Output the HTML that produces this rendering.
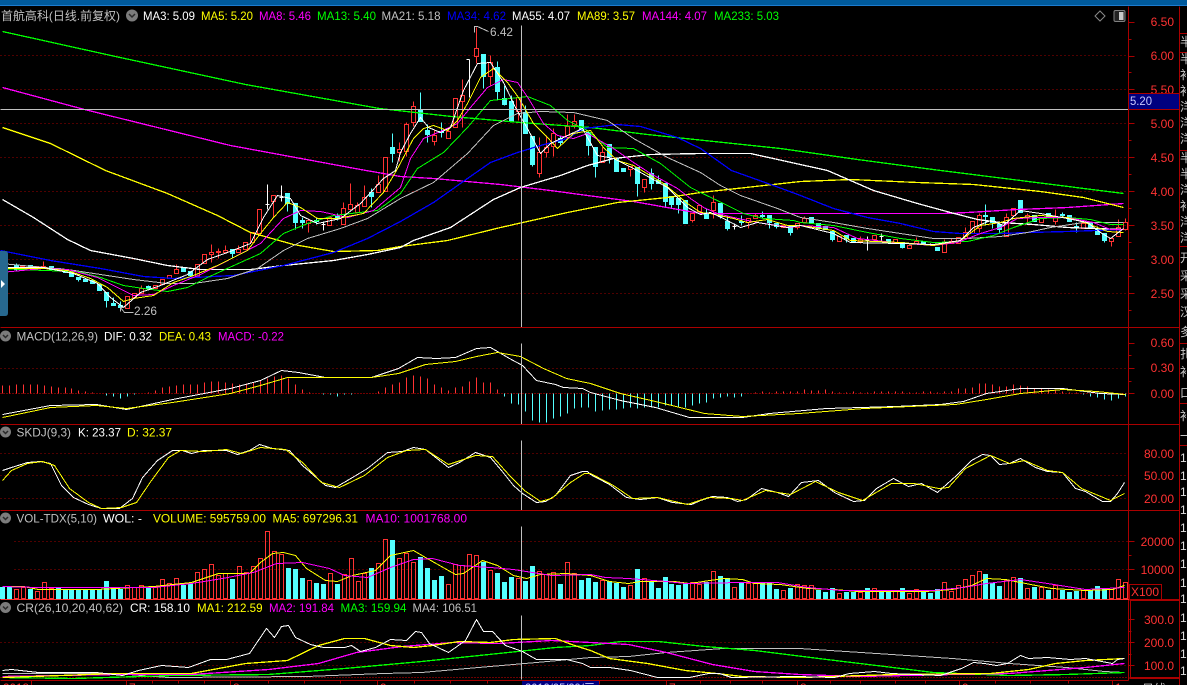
<!DOCTYPE html>
<html><head><meta charset="utf-8"><style>
html,body{margin:0;padding:0;background:#000;width:1187px;height:685px;overflow:hidden}
svg{display:block;position:absolute;left:0;top:0}
text{font-family:"Liberation Sans","Noto Sans CJK SC",sans-serif;font-size:12px}
.l{fill:none;stroke-width:1;shape-rendering:crispEdges}
.t{stroke-width:1.3;shape-rendering:crispEdges}
.ax text{fill:#ff3232;text-anchor:end}
</style></head><body>
<svg width="1187" height="685" viewBox="0 0 1187 685" xmlns="http://www.w3.org/2000/svg">
<rect width="1187" height="685" fill="#000"/>
<rect width="1187" height="5" fill="#005a9c"/><rect y="5" width="1187" height="1" fill="#1c7cd0"/>

<g transform="translate(.5 .5)" shape-rendering="crispEdges">
<!-- grid -->
<path d="M0 55H1128M0 89H1128M0 123H1128M0 157H1128M0 191H1128M0 225H1128M0 259H1128M0 293H1128M0 368H1128M0 453H1128M0 475H1128M0 498H1128M14 541H1128M14 569H1128M0 642H1128M0 665H1128" stroke="#a00000" stroke-dasharray="1 3" fill="none"/>
<path d="M0 393H1128M0 677H1128" stroke="#e00000" stroke-dasharray="1 2" fill="none"/>

<!-- candles red -->
<path fill="none" stroke="#ff3232" d="M20 266h4V269h-4zM34 266h4V268h-4zM41 266h4V267h-4zM43 261V266M125 296h4V308h-4zM132 293h4V297h-4zM139 288h4V293h-4zM141 285V288M153 285h4V288h-4zM160 279h4V284h-4zM167 275h4V278h-4zM174 269h4V273h-4zM176 264V269M195 264h4V276h-4zM202 254h4V263h-4zM209 252h4V254h-4zM211 244V252M211 254V262M216 251h4V252h-4zM218 248V251M218 252V258M223 250h4V252h-4zM225 245V250M236 249h4V252h-4zM238 245V249M243 242h4V249h-4zM250 232h4V242h-4zM257 209h4V233h-4zM271 195h4V201h-4zM273 201V217M306 220h4V223h-4zM308 218V220M308 223V232M327 217h4V225h-4zM341 208h4V224h-4zM343 202V208M348 204h4V209h-4zM350 183V204M355 205h4V212h-4zM357 202V205M362 197h4V206h-4zM364 185V197M376 184h4V192h-4zM378 175V184M383 157h4V191h-4zM397 149h4V152h-4zM399 142V149M399 152V161M404 124h4V151h-4zM406 122V124M406 151V156M411 106h4V122h-4zM413 101V106M413 122V126M432 135h4V141h-4zM434 130V135M434 141V145M446 131h4V138h-4zM448 128V131M453 98h4V127h-4zM460 95h4V101h-4zM462 79V95M462 101V127M474 48h4V56h-4zM476 27V48M476 56V63M488 62h4V76h-4zM490 55V62M490 76V85M516 97h4V111h-4zM518 111V120M537 152h4V173h-4zM539 137V152M539 173V177M544 147h4V152h-4zM546 135V147M546 152V157M551 133h4V146h-4zM553 128V133M553 146V156M565 126h4V135h-4zM567 114V126M572 121h4V125h-4zM574 114V121M574 125V128M600 152h4V162h-4zM602 147V152M628 166h4V169h-4zM630 169V176M642 179h4V187h-4zM644 187V192M690 213h4V220h-4zM692 220V222M697 205h4V211h-4zM711 202h4V210h-4zM713 195V202M713 210V218M746 218h4V222h-4zM748 222V228M753 215h4V218h-4zM755 213V215M781 225h4V227h-4zM795 223h4V227h-4zM797 227V229M802 218h4V222h-4zM804 216V218M837 236h4V241h-4zM858 239h4V241h-4zM860 236V239M860 241V243M872 235h4V239h-4zM893 239h4V242h-4zM907 245h4V248h-4zM914 241h4V243h-4zM916 237V241M942 242h4V252h-4zM944 239V242M949 241h4V243h-4zM951 238V241M956 237h4V243h-4zM963 232h4V238h-4zM965 227V232M970 221h4V233h-4zM977 215h4V228h-4zM979 213V215M979 228V232M1004 217h4V236h-4zM1006 213V217M1011 208h4V215h-4zM1025 215h4V217h-4zM1027 213V215M1027 217V222M1039 217h4V222h-4zM1053 216h4V221h-4zM1055 209V216M1055 221V224M1081 223h4V228h-4zM1109 238h4V241h-4zM1111 241V246M1116 227h4V236h-4zM1118 219V227M1123 222h4V229h-4zM1125 218V222M1125 229V230"/>
<!-- candles cyan -->
<path fill="#54ffff" stroke="#54ffff" d="M14 265h4V269h-4zM16 263V270M28 265h4V268h-4zM49 266h4V269h-4zM56 268h4V269h-4zM63 269h4V272h-4zM69 272h4V276h-4zM76 277h4V279h-4zM78 279V281M83 279h4V281h-4zM90 280h4V283h-4zM97 284h4V290h-4zM104 292h4V300h-4zM106 300V307M111 303h4V305h-4zM113 297V303M118 305h4V307h-4zM120 301V310M146 286h4V288h-4zM148 285V290M181 268h4V271h-4zM188 271h4V275h-4zM230 249h4V253h-4zM232 253V258M285 193h4V203h-4zM287 203V211M293 203h4V222h-4zM295 222V229M300 220h4V222h-4zM302 217V228M314 220h4V221h-4zM316 218V224M335 216h4V217h-4zM337 213V220M369 192h4V196h-4zM371 188V207M390 147h4V153h-4zM392 133V162M418 109h4V121h-4zM420 92V109M425 130h4V134h-4zM427 124V142M439 131h4V132h-4zM441 122V137M481 54h4V76h-4zM483 76V88M495 67h4V91h-4zM497 61V100M502 98h4V104h-4zM504 85V105M509 101h4V121h-4zM511 95V101M523 112h4V133h-4zM525 105V112M530 136h4V164h-4zM532 164V166M558 138h4V142h-4zM560 135V145M579 120h4V130h-4zM586 132h4V145h-4zM588 145V155M593 147h4V166h-4zM595 166V177M607 144h4V156h-4zM609 156V163M614 158h4V171h-4zM621 168h4V171h-4zM635 167h4V183h-4zM637 183V196M649 173h4V183h-4zM651 168V189M656 180h4V183h-4zM658 175V180M663 183h4V201h-4zM665 201V206M669 196h4V204h-4zM671 204V208M676 198h4V204h-4zM678 204V213M683 200h4V223h-4zM704 214h4V218h-4zM706 208V214M718 203h4V216h-4zM720 216V218M725 221h4V228h-4zM727 217V230M739 221h4V222h-4zM741 215V225M760 215h4V216h-4zM762 211V218M767 215h4V222h-4zM769 222V228M774 223h4V226h-4zM776 226V228M788 225h4V232h-4zM790 232V235M809 217h4V223h-4zM816 223h4V228h-4zM823 226h4V229h-4zM830 231h4V239h-4zM832 239V241M844 235h4V238h-4zM846 238V242M851 238h4V242h-4zM886 239h4V242h-4zM900 242h4V247h-4zM902 247V248M921 241h4V243h-4zM935 247h4V250h-4zM983 215h4V216h-4zM985 204V225M990 217h4V222h-4zM992 222V228M997 224h4V229h-4zM999 221V233M1018 200h4V212h-4zM1032 215h4V221h-4zM1046 213h4V217h-4zM1060 214h4V215h-4zM1062 212V216M1067 215h4V221h-4zM1074 226h4V227h-4zM1076 222V232M1088 222h4V227h-4zM1095 229h4V234h-4zM1097 226V229M1102 233h4V240h-4zM1104 240V242"/>
<!-- white dojis -->
<path fill="none" stroke="#fff" d="M267 184V209M265 204h4M281 185V201M279 197h4M323 222V230M321 224h4M469 59V97M466 59h3M867 236V250M865 240h4M881 233V240M879 236h4M930 243V245M928 244h4M734 223V229M732 226h4"/>
</g>

<g transform="translate(.5 .5)">
<!-- long MAs -->
<polyline class="l t" stroke="#00ff00" points="2,31 115,56 245,84 379,108 451,116 520,122 590,127 647,134 704,140 780,148 857,159 940,170 1020,180 1123,193"/>
<polyline class="l t" stroke="#ff00ff" points="2,87 84,109 230,145 360,169 400,176 433,178 500,184 550,190 587,195 633,201 700,213 800,213 943,213 967,212 1017,209 1067,207 1123,203"/>
<polyline class="l t" stroke="#ffff00" points="2,127 50,143 105,170 167,193 217,215 250,232 293,244 333,251 377,250 400,246 447,240 500,227 567,212 617,202 667,197 700,192 800,181 850,179 917,182 973,184 1040,191 1083,197 1123,207"/>
<polyline class="l t" stroke="#ffffff" points="2,199 33,217 67,239 90,250 133,258 167,265 200,269 250,269 283,265 333,260 367,254 400,247 413,240 450,227 493,199 520,187 560,175 587,165 613,158 650,154 700,153 750,153 827,170 873,190 917,203 950,212 977,219 1000,222 1033,224 1067,227 1123,229"/>
<polyline class="l t" stroke="#0000ff" points="0,250 50,260 100,268 143,276 173,278 233,275 283,265 333,252 367,238 400,221 433,202 467,178 490,162 517,152 540,145 567,138 583,128 617,124 640,126 677,137 700,148 731,170 773,185 800,195 833,208 867,217 900,223 933,231 960,233 1000,233 1027,232 1067,231 1123,229"/>
<!-- short MAs -->
<polyline class="l" stroke="#c0c0c0" points="0,263 33,266 67,269 100,274 133,279 167,283 193,283 227,278 257,268 283,250 307,238 340,228 367,218 400,198 433,182 467,153 493,125 517,113 540,111 573,112 607,120 633,138 667,157 700,172 720,185 740,195 777,208 800,217 833,222 867,228 900,233 933,238 967,238 1000,236 1027,232 1050,227 1083,222 1123,222"/>
<polyline class="l" stroke="#00ff00" points="0,268 43,270 77,271 100,277 123,285 143,288 167,291 187,287 207,277 240,262 260,253 283,233 307,223 333,215 377,210 400,193 417,168 443,152 467,127 490,100 510,98 527,96 550,105 567,120 587,130 607,147 633,148 660,163 690,187 700,192 723,203 743,213 763,218 793,220 800,222 833,225 867,232 900,238 933,242 967,241 993,235 1013,227 1040,218 1067,217 1090,219 1110,224 1123,224"/>
<polyline class="l" stroke="#ff00ff" points="0,272 43,268 67,269 97,277 113,285 133,295 153,294 173,285 200,274 233,257 260,243 283,218 300,210 320,211 347,217 373,210 400,187 410,158 423,138 440,131 457,123 470,107 487,87 503,79 517,82 528,98 543,123 557,135 573,138 587,133 613,148 633,162 650,173 677,188 690,198 703,207 717,213 733,217 757,222 790,227 800,225 833,227 857,238 893,242 933,245 957,242 980,233 1000,227 1017,218 1040,217 1067,217 1093,222 1110,229 1123,229"/>
<polyline class="l" stroke="#ffff00" points="0,268 43,268 67,270 90,278 107,287 123,301 133,298 153,295 173,282 193,275 217,265 247,250 260,233 273,217 287,202 300,207 317,218 337,218 363,213 383,192 396,170 413,138 423,128 433,125 447,130 457,120 467,103 480,77 493,68 507,82 518,97 533,123 547,137 557,148 573,133 590,130 603,147 617,160 633,165 663,183 687,203 700,212 710,213 733,218 747,222 767,219 787,225 800,225 833,230 850,240 900,242 933,245 960,240 980,225 1000,222 1013,218 1040,215 1067,217 1087,223 1107,231 1123,232"/>
<polyline class="l" stroke="#ffffff" points="0,267 43,267 73,273 97,283 110,297 123,307 140,292 160,285 187,274 207,259 227,252 250,243 263,217 277,195 290,198 300,215 317,223 340,218 360,203 383,178 395,170 400,152 410,133 420,117 428,127 440,132 450,127 463,90 477,63 490,62 503,82 515,107 528,130 540,153 550,143 567,135 582,128 597,155 613,158 633,168 667,187 687,207 700,214 710,212 723,218 740,227 757,222 787,227 800,225 833,233 850,242 900,243 933,244 960,240 973,227 990,220 1003,225 1020,210 1040,213 1067,218 1087,222 1100,232 1110,238 1123,228"/>

<!-- annotations -->
<path d="M474 32V26h3M477 26L488 31" fill="none" stroke="#c0c0c0" shape-rendering="crispEdges"/>
<path d="M120 307L124 312H133M120 307l4 0M120 307v4" fill="none" stroke="#c0c0c0" shape-rendering="crispEdges"/>

<!-- MACD bars -->
<path fill="none" stroke="#ff3232" shape-rendering="crispEdges" d="M2 393V385M9 393V385M16 393V384M23 393V384M30 393V384M37 393V384M44 393V385M51 393V386M58 393V387M65 393V387M71 393V388M78 393V390M85 393V391M92 393V392M148 393V392M155 393V390M162 393V387M169 393V386M176 393V385M183 393V384M190 393V384M197 393V384M204 393V382M211 393V381M218 393V381M225 393V382M232 393V383M239 393V384M246 393V383M253 393V382M260 393V380M267 393V378M274 393V376M281 393V375M288 393V378M295 393V384M302 393V389M309 393V392M378 393V391M385 393V387M392 393V384M399 393V382M406 393V377M413 393V375M420 393V376M427 393V378M434 393V384M441 393V387M448 393V390M455 393V387M462 393V386M469 393V381M476 393V377M483 393V382M490 393V382M497 393V389M755 393V392M762 393V391M769 393V392M776 393V391M783 393V391M790 393V391M797 393V391M804 393V389M811 393V390M818 393V390M825 393V389M832 393V391M839 393V392M846 393V392M853 393V391M860 393V392M867 393V392M874 393V391M881 393V391M888 393V391M895 393V391M902 393V391M909 393V392M916 393V392M923 393V391M930 393V391M937 393V392M944 393V391M951 393V391M958 393V388M965 393V388M972 393V387M979 393V383M985 393V383M992 393V384M999 393V386M1006 393V386M1013 393V384M1020 393V385M1027 393V386M1034 393V388M1041 393V388M1048 393V389M1055 393V390M1062 393V391M1069 393V392M1076 393V392"/>
<path fill="none" stroke="#54ffff" shape-rendering="crispEdges" d="M106 393V395M113 393V396M120 393V398M127 393V396M134 393V394M323 393V394M330 393V394M337 393V396M344 393V394M351 393V394M504 393V396M511 393V403M518 393V404M525 393V411M532 393V420M539 393V422M546 393V422M553 393V418M560 393V416M567 393V413M574 393V408M581 393V407M588 393V407M595 393V411M602 393V410M609 393V409M616 393V409M623 393V408M630 393V407M637 393V408M644 393V407M651 393V407M658 393V407M665 393V405M671 393V405M678 393V407M685 393V407M692 393V405M699 393V403M706 393V402M713 393V398M720 393V397M727 393V396M734 393V397M741 393V396M1083 393V394M1090 393V396M1097 393V397M1104 393V399M1111 393V400M1118 393V398M1125 393V396"/>
<polyline class="l" stroke="#ffffff" points="2,414 50,405 96,404 126,409 172,399 230,388 260,380 281,370 298,372 325,377 371,377 398,368 417,357 436,358 455,357 476,348 490,347 509,358 522,365 536,380 555,384 563,387 582,388 590,392 620,400 655,407 689,417 742,417 769,413 826,408 895,406 940,404 963,401 986,393 1020,388 1062,388 1100,393 1125,394"/>
<polyline class="l" stroke="#ffff00" points="2,417 50,407 96,405 126,408 172,402 230,393 260,385 287,377 325,377 371,377 398,373 425,364 455,361 476,356 497,352 520,356 543,368 566,378 590,383 620,393 655,401 704,413 742,416 799,413 864,408 955,404 986,399 1020,393 1062,389 1096,391 1125,394"/>

<!-- SKDJ -->
<polyline class="l" stroke="#ffffff" points="2,470 11,467 27,462 40,461 50,463 61,485 73,497 88,504 101,508 119,508 132,498 142,477 157,460 172,450 182,450 191,453 203,450 226,450 237,454 249,450 259,444 272,448 289,450 302,465 325,485 335,487 352,477 367,468 387,452 402,451 413,447 425,449 448,467 459,462 475,452 490,457 501,470 513,485 522,493 536,502 545,501 555,495 570,475 582,471 587,471 590,474 609,484 626,497 640,499 657,497 672,502 691,504 700,500 712,496 727,497 737,501 746,499 761,488 777,492 788,496 801,482 818,480 834,492 853,501 864,500 876,488 893,478 908,486 921,483 937,492 956,475 971,460 982,454 990,455 999,464 1009,463 1020,458 1035,467 1047,471 1062,472 1075,488 1085,491 1102,501 1110,501 1117,493 1124,482"/>
<polyline class="l" stroke="#ffff00" points="2,480 11,470 27,463 42,461 54,465 69,488 88,502 101,508 121,507 136,502 151,480 168,457 180,450 203,451 226,449 241,453 260,447 285,449 302,462 321,482 339,487 364,475 387,457 406,450 425,449 448,464 475,455 492,456 509,475 524,490 540,501 551,498 570,482 584,473 590,473 613,485 632,498 657,497 687,504 708,497 731,498 742,500 765,490 790,494 815,481 838,492 862,500 891,483 914,483 938,488 948,487 965,468 990,455 1009,463 1024,460 1047,470 1062,472 1081,488 1110,500 1124,493"/>

<!-- VOL bars -->
<path fill="none" stroke="#ff3232" shape-rendering="crispEdges" d="M14 589h4V598h-4zM21 587h4V598h-4zM35 591h4V598h-4zM42 582h4V598h-4zM49 588h4V598h-4zM125 585h4V598h-4zM132 587h4V598h-4zM139 585h4V598h-4zM153 587h4V598h-4zM160 579h4V598h-4zM167 583h4V598h-4zM174 578h4V598h-4zM195 572h4V598h-4zM202 569h4V598h-4zM209 564h4V598h-4zM216 575h4V598h-4zM223 573h4V598h-4zM237 566h4V598h-4zM244 572h4V598h-4zM251 566h4V598h-4zM258 558h4V598h-4zM265 531h4V598h-4zM272 551h4V598h-4zM279 554h4V598h-4zM307 580h4V598h-4zM328 573h4V598h-4zM342 574h4V598h-4zM349 558h4V598h-4zM356 581h4V598h-4zM362 573h4V598h-4zM376 563h4V598h-4zM383 539h4V598h-4zM397 558h4V598h-4zM404 553h4V598h-4zM411 562h4V598h-4zM446 584h4V598h-4zM453 564h4V598h-4zM460 565h4V598h-4zM467 554h4V598h-4zM474 555h4V598h-4zM488 570h4V598h-4zM516 578h4V598h-4zM537 571h4V598h-4zM544 574h4V598h-4zM551 572h4V598h-4zM565 562h4V598h-4zM572 573h4V598h-4zM600 580h4V598h-4zM628 585h4V598h-4zM642 578h4V598h-4zM690 582h4V598h-4zM697 584h4V598h-4zM711 571h4V598h-4zM732 587h4V598h-4zM746 583h4V598h-4zM753 582h4V598h-4zM781 590h4V598h-4zM795 584h4V598h-4zM802 585h4V598h-4zM809 585h4V598h-4zM837 593h4V598h-4zM858 592h4V598h-4zM872 588h4V598h-4zM893 591h4V598h-4zM907 593h4V598h-4zM914 589h4V598h-4zM942 582h4V598h-4zM949 591h4V598h-4zM956 585h4V598h-4zM963 579h4V598h-4zM970 575h4V598h-4zM977 571h4V598h-4zM1004 580h4V598h-4zM1011 577h4V598h-4zM1025 588h4V598h-4zM1039 587h4V598h-4zM1053 585h4V598h-4zM1081 590h4V598h-4zM1109 589h4V598h-4zM1116 579h4V598h-4zM1123 582h4V598h-4z"/>
<path fill="#54ffff" stroke="#54ffff" shape-rendering="crispEdges" d="M0 587h4V598h-4zM7 586h4V598h-4zM28 589h4V598h-4zM56 588h4V598h-4zM63 590h4V598h-4zM69 589h4V598h-4zM76 589h4V598h-4zM83 589h4V598h-4zM90 590h4V598h-4zM97 589h4V598h-4zM104 581h4V598h-4zM111 588h4V598h-4zM118 589h4V598h-4zM146 587h4V598h-4zM181 585h4V598h-4zM188 584h4V598h-4zM230 579h4V598h-4zM286 568h4V598h-4zM293 569h4V598h-4zM300 578h4V598h-4zM314 583h4V598h-4zM321 584h4V598h-4zM335 584h4V598h-4zM369 568h4V598h-4zM390 540h4V598h-4zM418 557h4V598h-4zM425 568h4V598h-4zM432 580h4V598h-4zM439 576h4V598h-4zM481 562h4V598h-4zM495 573h4V598h-4zM502 582h4V598h-4zM509 577h4V598h-4zM523 581h4V598h-4zM530 566h4V598h-4zM558 584h4V598h-4zM579 580h4V598h-4zM586 578h4V598h-4zM593 582h4V598h-4zM607 581h4V598h-4zM614 583h4V598h-4zM621 587h4V598h-4zM635 569h4V598h-4zM649 582h4V598h-4zM656 588h4V598h-4zM663 577h4V598h-4zM669 584h4V598h-4zM676 585h4V598h-4zM683 583h4V598h-4zM704 582h4V598h-4zM718 576h4V598h-4zM725 578h4V598h-4zM739 582h4V598h-4zM760 583h4V598h-4zM767 582h4V598h-4zM774 589h4V598h-4zM788 588h4V598h-4zM816 590h4V598h-4zM823 592h4V598h-4zM830 588h4V598h-4zM844 592h4V598h-4zM851 592h4V598h-4zM865 588h4V598h-4zM879 591h4V598h-4zM886 591h4V598h-4zM900 588h4V598h-4zM921 592h4V598h-4zM928 593h4V598h-4zM935 589h4V598h-4zM983 574h4V598h-4zM990 583h4V598h-4zM997 586h4V598h-4zM1018 578h4V598h-4zM1032 587h4V598h-4zM1046 590h4V598h-4zM1060 590h4V598h-4zM1067 592h4V598h-4zM1074 591h4V598h-4zM1088 590h4V598h-4zM1095 586h4V598h-4zM1102 588h4V598h-4z"/>
<polyline class="l" stroke="#ffff00" points="2,586 23,586 38,589 96,589 153,586 191,582 218,573 249,573 260,562 272,553 283,552 295,555 306,568 325,580 337,581 352,575 375,570 390,555 413,550 425,557 455,574 463,573 482,560 497,565 513,575 526,578 540,574 566,573 590,575 609,581 628,583 640,581 674,581 689,583 723,578 742,579 754,583 780,584 807,588 834,589 857,591 925,591 952,589 971,585 986,578 1005,579 1020,582 1051,588 1085,590 1112,589 1124,585"/>
<polyline class="l" stroke="#ff00ff" points="2,586 38,587 96,587 153,587 191,583 222,578 253,572 276,563 302,562 329,568 344,575 367,577 390,567 413,559 432,558 459,565 490,567 513,569 551,575 590,574 605,577 628,578 666,581 685,583 742,582 777,582 807,587 841,590 933,590 963,587 986,583 1020,579 1047,583 1085,589 1124,587"/>

<!-- CR -->
<polyline class="l" stroke="#c0c0c0" points="2,673 115,673 168,677 306,676 383,673 421,672 478,667 536,662 590,657 628,656 666,652 723,648 799,648 876,653 952,658 1009,663 1066,667 1104,671 1124,672"/>
<polyline class="l t" stroke="#00ff00" points="2,677 73,678 172,675 268,674 344,668 421,661 498,653 555,647 590,645 620,641 658,641 704,646 754,650 818,658 876,665 933,672 1009,675 1066,674 1124,672"/>
<polyline class="l t" stroke="#ff00ff" points="2,676 115,674 191,674 268,669 318,663 356,652 402,646 452,642 498,643 551,640 590,642 628,644 666,652 712,664 754,671 799,674 857,676 952,674 1009,673 1047,670 1085,667 1124,663"/>
<polyline class="l t" stroke="#ffff00" points="2,677 61,675 115,673 191,673 245,663 287,660 318,645 344,638 364,638 390,645 413,647 432,645 459,641 490,642 513,639 555,638 574,645 590,650 609,658 647,663 685,670 716,673 742,676 799,677 895,674 990,673 1028,669 1055,663 1085,660 1124,658"/>
<polyline class="l" stroke="#ffffff" points="2,670 11,669 38,672 96,672 122,675 138,670 161,665 188,667 210,659 226,659 249,653 266,628 274,637 281,626 288,625 295,637 310,644 323,647 344,647 351,645 360,651 375,647 390,639 406,640 415,631 421,632 429,643 448,652 465,640 476,619 483,631 492,631 505,645 522,651 536,659 566,659 582,663 590,667 609,667 630,670 657,677 689,677 708,673 719,673 731,677 796,676 834,677 849,673 874,671 891,673 940,675 961,668 973,662 984,663 996,665 1007,663 1020,655 1028,658 1047,657 1070,659 1085,658 1112,663 1117,659 1124,658"/>

<!-- crosshair -->
<g shape-rendering="crispEdges" stroke="#c0c0c0" fill="none">
<path d="M0 109H1128M521 25V327M521 343V424M521 440V510M521 526V599M521 615V679"/>
</g>

<!-- panel borders -->
<g shape-rendering="crispEdges" stroke="#aa0000" fill="none">
<path d="M0 327H1179M0 424H1179M0 510H1179M1128 6V680M1179 6V685M0 680H1128M1179 33H1187M1179 52H1187M1179 150H1187M1179 246H1187M1179 343H1187M1179 403H1187M1179 445H1187"/>
<path d="M0 599H1129" stroke="#ff3232"/>
<path d="M1129 599H1179M1129 600H1179M1129 678H1179M1129 677H1179M1130 600V678" />
<path d="M1128 22h6M1128 39h3M1128 56h6M1128 72h3M1128 89h6M1128 123h6M1128 140h3M1128 157h6M1128 174h3M1128 191h6M1128 208h3M1128 225h6M1128 242h3M1128 259h6M1128 276h3M1128 293h6M1128 310h3M1128 343h6M1128 355h3M1128 368h6M1128 381h3M1128 393h6M1128 541h6M1128 555h3M1128 569h6M1128 619h6M1128 631h3M1128 642h6M1128 654h3M1128 665h6"/>
<path d="M31 680v5M126 680v5M152 680v3M178 680v3M204 680v3M230 680v5M268 680v3M304 680v3M340 680v3M377 680v5M414 680v3M450 680v3M487 680v3M599 680v4M666 680v5M700 680v3M730 680v3M762 680v3M797 680v5M830 680v3M860 680v3M895 680v3M925 680v3M959 680v5M995 680v3M1030 680v3M1068 680v3M1112 680v5"/>
</g>
</g>

<!-- X100 box -->
<rect x="1129.5" y="584.5" width="32" height="15" fill="#000" stroke="#aa0000" shape-rendering="crispEdges"/>
<text x="1131" y="596" fill="#ff3232" textLength="28" lengthAdjust="spacingAndGlyphs">X100</text>

<!-- axis labels -->
<g class="ax">
<text x="1174" y="26">6.50</text><text x="1174" y="60">6.00</text><text x="1174" y="94">5.50</text><text x="1174" y="128">5.00</text><text x="1174" y="162">4.50</text><text x="1174" y="196">4.00</text><text x="1174" y="230">3.50</text><text x="1174" y="264">3.00</text><text x="1174" y="298">2.50</text>
<text x="1174" y="347">0.60</text><text x="1174" y="372">0.30</text><text x="1174" y="398">0.00</text>
<text x="1174" y="458">80.00</text><text x="1174" y="480">50.00</text><text x="1174" y="503">20.00</text>
<text x="1174" y="546">20000</text><text x="1174" y="574">10000</text>
<text x="1174" y="624">300.0</text><text x="1174" y="647">200.0</text><text x="1174" y="670">100.0</text>
</g>
<!-- 5.20 box over 5.50 -->
<rect x="1129" y="93" width="50" height="16" fill="#00007f"/>
<path d="M1129 93.5H1179M1129 109.5H1179" stroke="#aa0000" shape-rendering="crispEdges"/>
<text x="1130" y="105" fill="#c8c8ff" textLength="22" lengthAdjust="spacingAndGlyphs">5.20</text>

<!-- price labels -->
<text x="490" y="36" fill="#c0c0c0" textLength="23" lengthAdjust="spacingAndGlyphs">6.42</text>
<text x="134" y="315" fill="#c0c0c0" textLength="23" lengthAdjust="spacingAndGlyphs">2.26</text>

<!-- header -->
<text x="1" y="20" fill="#c0c0c0" textLength="119" lengthAdjust="spacingAndGlyphs">首航高科(日线.前复权)</text>
<circle cx="132" cy="15.5" r="6" fill="#7c7c7c"/><path d="M129 14l3 3 3-3" fill="none" stroke="#2a2a2a" stroke-width="1.5"/>
<g>
<text x="143" y="20" fill="#fff" textLength="52" lengthAdjust="spacingAndGlyphs">MA3: 5.09</text>
<text x="201" y="20" fill="#ff0" textLength="52" lengthAdjust="spacingAndGlyphs">MA5: 5.20</text>
<text x="259" y="20" fill="#f0f" textLength="52" lengthAdjust="spacingAndGlyphs">MA8: 5.46</text>
<text x="317" y="20" fill="#0f0" textLength="59" lengthAdjust="spacingAndGlyphs">MA13: 5.40</text>
<text x="381.5" y="20" fill="#c0c0c0" textLength="59" lengthAdjust="spacingAndGlyphs">MA21: 5.18</text>
<text x="447" y="20" fill="#00f" textLength="59" lengthAdjust="spacingAndGlyphs">MA34: 4.62</text>
<text x="512" y="20" fill="#fff" textLength="58" lengthAdjust="spacingAndGlyphs">MA55: 4.07</text>
<text x="577" y="20" fill="#ff0" textLength="58" lengthAdjust="spacingAndGlyphs">MA89: 3.57</text>
<text x="642" y="20" fill="#f0f" textLength="65" lengthAdjust="spacingAndGlyphs">MA144: 4.07</text>
<text x="714" y="20" fill="#0f0" textLength="65" lengthAdjust="spacingAndGlyphs">MA233: 5.03</text>
</g>
<path d="M1100 11l5 5-5 5-5-5z" fill="none" stroke="#8a8a8a"/>
<rect x="1114" y="10.5" width="11" height="11" rx="1.5" fill="#222" stroke="#808080"/><rect x="1119" y="12" width="4.5" height="8" fill="#c8c8c8"/>

<!-- MACD row -->
<circle cx="5.5" cy="336" r="5.5" fill="#7c7c7c"/><path d="M3 335l2.500 2.500 2.500-2.500" fill="none" stroke="#2a2a2a" stroke-width="1.5"/>
<text x="16.500" y="340.500" fill="#c0c0c0" textLength="81.500" lengthAdjust="spacingAndGlyphs">MACD(12,26,9)</text>
<text x="104" y="340.500" fill="#fff" textLength="48" lengthAdjust="spacingAndGlyphs">DIF: 0.32</text>
<text x="159" y="340.500" fill="#ff0" textLength="52" lengthAdjust="spacingAndGlyphs">DEA: 0.43</text>
<text x="218" y="340.500" fill="#f0f" textLength="66" lengthAdjust="spacingAndGlyphs">MACD: -0.22</text>

<!-- SKDJ row -->
<circle cx="5.5" cy="432" r="5.5" fill="#7c7c7c"/><path d="M3 431l2.500 2.500 2.500-2.500" fill="none" stroke="#2a2a2a" stroke-width="1.5"/>
<text x="16.500" y="436.500" fill="#c0c0c0" textLength="54.500" lengthAdjust="spacingAndGlyphs">SKDJ(9,3)</text>
<text x="78" y="436.500" fill="#fff" textLength="43" lengthAdjust="spacingAndGlyphs">K: 23.37</text>
<text x="127" y="436.500" fill="#ff0" textLength="45" lengthAdjust="spacingAndGlyphs">D: 32.37</text>

<!-- VOL row -->
<circle cx="5.5" cy="518" r="5.5" fill="#7c7c7c"/><path d="M3 517l2.500 2.500 2.500-2.500" fill="none" stroke="#2a2a2a" stroke-width="1.5"/>
<text x="16.500" y="522.500" fill="#c0c0c0" textLength="80.500" lengthAdjust="spacingAndGlyphs">VOL-TDX(5,10)</text>
<text x="103" y="522.500" fill="#fff" textLength="39" lengthAdjust="spacingAndGlyphs">WOL: -</text>
<text x="153" y="522.500" fill="#ff0" textLength="113" lengthAdjust="spacingAndGlyphs">VOLUME: 595759.00</text>
<text x="272.500" y="522.500" fill="#ff0" textLength="85.500" lengthAdjust="spacingAndGlyphs">MA5: 697296.31</text>
<text x="365.500" y="522.500" fill="#f0f" textLength="101.500" lengthAdjust="spacingAndGlyphs">MA10: 1001768.00</text>

<!-- CR row -->
<circle cx="5.5" cy="607.5" r="5.5" fill="#7c7c7c"/><path d="M3 606.500l2.500 2.500 2.500-2.500" fill="none" stroke="#2a2a2a" stroke-width="1.5"/>
<text x="16.500" y="612" fill="#c0c0c0" textLength="106.500" lengthAdjust="spacingAndGlyphs">CR(26,10,20,40,62)</text>
<text x="130" y="612" fill="#fff" textLength="60" lengthAdjust="spacingAndGlyphs">CR: 158.10</text>
<text x="197" y="612" fill="#ff0" textLength="65.500" lengthAdjust="spacingAndGlyphs">MA1: 212.59</text>
<text x="269" y="612" fill="#f0f" textLength="65" lengthAdjust="spacingAndGlyphs">MA2: 191.84</text>
<text x="340.500" y="612" fill="#0f0" textLength="66" lengthAdjust="spacingAndGlyphs">MA3: 159.94</text>
<text x="412.500" y="612" fill="#c0c0c0" textLength="64.500" lengthAdjust="spacingAndGlyphs">MA4: 106.51</text>

<!-- bottom date axis -->
<rect x="522" y="681" width="77" height="4" fill="#00007f"/>
<text x="525" y="692" fill="#c8c8ff" textLength="70" lengthAdjust="spacingAndGlyphs">2019/05/29/三</text>
<g fill="#ff3232">
<text x="3" y="692" textLength="26" lengthAdjust="spacingAndGlyphs">2018</text>
<text x="129" y="692">7</text><text x="233" y="692">8</text><text x="380" y="692">9</text>
<text x="669" y="692">7</text><text x="800" y="692">8</text><text x="962" y="692">9</text><text x="1115" y="692">1</text>
</g>
<text x="1142" y="693" fill="#c0c0c0" font-size="12">日线</text>

<!-- right clipped column -->
<g fill="#c8c8c8" style="font-size:14px">
<text x="1180" y="46">半</text><text x="1180" y="63">半</text><text x="1180" y="79">补</text><text x="1180" y="95">补</text><text x="1180" y="111">洋</text><text x="1180" y="127">洋</text><text x="1180" y="143">洋</text><text x="1180" y="162">半</text><text x="1180" y="178">半</text><text x="1180" y="194">洋</text><text x="1180" y="210">补</text><text x="1180" y="226">洋</text><text x="1180" y="242">洋</text><text x="1180" y="262">开</text><text x="1180" y="280">采</text><text x="1180" y="298">采</text><text x="1180" y="316">汉</text><text x="1180" y="336">多</text><text x="1180" y="358">扎</text><text x="1180" y="376">补</text><text x="1180" y="397">口</text><text x="1180" y="420">补</text><text x="1180" y="440">一</text>
</g>
<g fill="#e0e0e0" style="font-size:14px">
<text x="1180" y="462">1</text><text x="1180" y="480">1</text><text x="1180" y="496">1</text><text x="1180" y="514">1</text><text x="1180" y="532">1</text><text x="1180" y="550">1</text><text x="1180" y="568">1</text><text x="1180" y="587">1</text><text x="1180" y="603">1</text><text x="1180" y="622">1</text><text x="1180" y="640">1</text><text x="1180" y="658">1</text><text x="1180" y="675">1</text>
</g>

<!-- left tab -->
<path d="M0 251h5q3 0 3 3v59q0 3-3 3h-5z" fill="#27688f"/>
<path d="M1 280l4 4-4 4z" fill="#fff"/>
</svg>
</body></html>
